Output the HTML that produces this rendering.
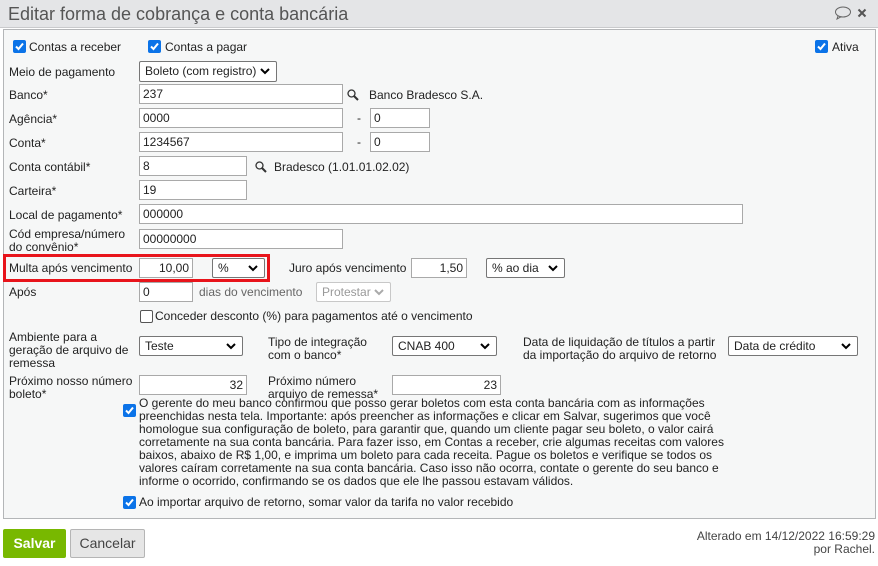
<!DOCTYPE html>
<html><head><meta charset="utf-8"><style>
*{box-sizing:border-box}
body{margin:0;width:878px;height:566px;background:#fff;font-family:"Liberation Sans","DejaVu Sans",sans-serif;font-size:12px;color:#222;position:relative;overflow:hidden}
.a{position:absolute;white-space:nowrap;line-height:13px}
.title{position:absolute;left:0;top:0;width:878px;height:28px;background:#e4e5e7;border-bottom:1px solid #c9cacc}
.panel{position:absolute;left:3px;top:29px;width:873px;height:490px;background:#f6f7f7;border:1px solid #b4b6b8}
.in{position:absolute;height:20px;background:#fff;border:1px solid #a9a9a9;padding:2px 3px;font-size:12px;line-height:14px}
.r{text-align:right}
.sel{position:absolute;height:21px;background:#fff;border:1px solid #767676;border-radius:2px;padding:2px 5px;font-size:12px;line-height:15px}
.sel svg{position:absolute;right:6px;top:6px}
.cb{position:absolute;width:13px;height:13px;background:#0b73e8;border-radius:2px}
.cb svg{position:absolute;left:1px;top:1px}
.cbe{position:absolute;width:13px;height:13px;background:#fff;border:1px solid #555;border-radius:2px}
</style></head><body>
<div class="title"><div class="a" style="left:8px;top:4px;font-size:18px;line-height:20px;color:#555">Editar forma de cobrança e conta bancária</div>
<svg style="position:absolute;left:834px;top:6px" width="18" height="14"><ellipse cx="9" cy="6" rx="7.5" ry="5" fill="none" stroke="#666" stroke-width="1"/><path d="M4 10 L3 13 L7 10.8" fill="none" stroke="#666"/></svg>
<svg style="position:absolute;left:857px;top:8px" width="10" height="10"><path d="M1.5 1.5L8.5 8.5M8.5 1.5L1.5 8.5" stroke="#555" stroke-width="2"/></svg>
</div>
<div class="panel"></div>

<div class="cb" style="left:13px;top:40px"><svg width="11" height="11"><path d="M2 5.5L4.5 8L9 2.5" fill="none" stroke="#fff" stroke-width="2"/></svg></div>
<div class="a" style="left:29px;top:41px">Contas a receber</div>
<div class="cb" style="left:148px;top:40px"><svg width="11" height="11"><path d="M2 5.5L4.5 8L9 2.5" fill="none" stroke="#fff" stroke-width="2"/></svg></div>
<div class="a" style="left:165px;top:41px">Contas a pagar</div>
<div class="cb" style="left:815px;top:40px"><svg width="11" height="11"><path d="M2 5.5L4.5 8L9 2.5" fill="none" stroke="#fff" stroke-width="2"/></svg></div>
<div class="a" style="left:832px;top:41px">Ativa</div>

<div class="a" style="left:9px;top:66px">Meio de pagamento</div>
<div class="sel" style="left:139px;top:61px;width:138px">Boleto (com registro)<svg width="10" height="7"><path d="M1 1L5 5L9 1" fill="none" stroke="#000" stroke-width="2"/></svg></div>

<div class="a" style="left:9px;top:89px">Banco*</div>
<div class="in" style="left:139px;top:84px;width:204px">237</div>
<svg style="position:absolute;left:347px;top:89px" width="12" height="12"><circle cx="4.5" cy="4.5" r="3.5" fill="none" stroke="#333" stroke-width="1.3"/><path d="M7 7L11 11" stroke="#333" stroke-width="2"/></svg>
<div class="a" style="left:369px;top:89px">Banco Bradesco S.A.</div>

<div class="a" style="left:9px;top:113px">Agência*</div>
<div class="in" style="left:139px;top:108px;width:204px">0000</div>
<div class="a" style="left:357px;top:112px">-</div>
<div class="in" style="left:370px;top:108px;width:60px">0</div>

<div class="a" style="left:9px;top:137px">Conta*</div>
<div class="in" style="left:139px;top:132px;width:204px">1234567</div>
<div class="a" style="left:357px;top:136px">-</div>
<div class="in" style="left:370px;top:132px;width:60px">0</div>

<div class="a" style="left:9px;top:161px">Conta contábil*</div>
<div class="in" style="left:139px;top:156px;width:108px">8</div>
<svg style="position:absolute;left:255px;top:161px" width="12" height="12"><circle cx="4.5" cy="4.5" r="3.5" fill="none" stroke="#333" stroke-width="1.3"/><path d="M7 7L11 11" stroke="#333" stroke-width="2"/></svg>
<div class="a" style="left:274px;top:161px">Bradesco (1.01.01.02.02)</div>

<div class="a" style="left:9px;top:185px">Carteira*</div>
<div class="in" style="left:139px;top:180px;width:108px">19</div>

<div class="a" style="left:9px;top:209px">Local de pagamento*</div>
<div class="in" style="left:139px;top:204px;width:604px">000000</div>

<div class="a" style="left:9px;top:228px">Cód empresa/número<br>do convênio*</div>
<div class="in" style="left:139px;top:229px;width:204px">00000000</div>

<div style="position:absolute;left:3px;top:254px;width:267px;height:28px;border:3px solid #e8141b"></div>
<div class="a" style="left:9px;top:262px">Multa após vencimento</div>
<div class="in r" style="left:139px;top:258px;width:54px">10,00</div>
<div class="sel" style="left:212px;top:258px;width:53px;height:20px">%<svg width="10" height="7"><path d="M1 1L5 5L9 1" fill="none" stroke="#000" stroke-width="2"/></svg></div>
<div class="a" style="left:289px;top:262px">Juro após vencimento</div>
<div class="in r" style="left:411px;top:258px;width:56px">1,50</div>
<div class="sel" style="left:486px;top:258px;width:79px;height:20px">% ao dia<svg width="10" height="7"><path d="M1 1L5 5L9 1" fill="none" stroke="#000" stroke-width="2"/></svg></div>

<div class="a" style="left:9px;top:286px">Após</div>
<div class="in" style="left:139px;top:282px;width:54px">0</div>
<div class="a" style="left:199px;top:286px;color:#666">dias do vencimento</div>
<div class="sel" style="left:316px;top:282px;width:75px;height:20px;border-color:#c8c8c8;color:#999">Protestar<svg width="10" height="7"><path d="M1 1L5 5L9 1" fill="none" stroke="#aaa" stroke-width="2"/></svg></div>

<div class="cbe" style="left:140px;top:310px"></div>
<div class="a" style="left:155px;top:310px">Conceder desconto (%) para pagamentos até o vencimento</div>

<div class="a" style="left:9px;top:331px">Ambiente para a<br>geração de arquivo de<br>remessa</div>
<div class="sel" style="left:139px;top:336px;width:104px;height:20px">Teste<svg width="10" height="7"><path d="M1 1L5 5L9 1" fill="none" stroke="#000" stroke-width="2"/></svg></div>
<div class="a" style="left:268px;top:336px">Tipo de integração<br>com o banco*</div>
<div class="sel" style="left:392px;top:336px;width:105px;height:20px">CNAB 400<svg width="10" height="7"><path d="M1 1L5 5L9 1" fill="none" stroke="#000" stroke-width="2"/></svg></div>
<div class="a" style="left:523px;top:336px">Data de liquidação de títulos a partir<br>da importação do arquivo de retorno</div>
<div class="sel" style="left:728px;top:336px;width:130px;height:20px">Data de crédito<svg width="10" height="7"><path d="M1 1L5 5L9 1" fill="none" stroke="#000" stroke-width="2"/></svg></div>

<div class="a" style="left:9px;top:375px">Próximo nosso número<br>boleto*</div>
<div class="in r" style="left:139px;top:375px;width:108px">32</div>
<div class="a" style="left:268px;top:375px">Próximo número<br>arquivo de remessa*</div>
<div class="in r" style="left:392px;top:375px;width:109px">23</div>

<div class="cb" style="left:123px;top:404px"><svg width="11" height="11"><path d="M2 5.5L4.5 8L9 2.5" fill="none" stroke="#fff" stroke-width="2"/></svg></div>
<div class="a" style="left:139px;top:397px;line-height:13px">O gerente do meu banco confirmou que posso gerar boletos com esta conta bancária com as informações<br>preenchidas nesta tela. Importante: após preencher as informações e clicar em Salvar, sugerimos que você<br>homologue sua configuração de boleto, para garantir que, quando um cliente pagar seu boleto, o valor cairá<br>corretamente na sua conta bancária. Para fazer isso, em Contas a receber, crie algumas receitas com valores<br>baixos, abaixo de R$ 1,00, e imprima um boleto para cada receita. Pague os boletos e verifique se todos os<br>valores caíram corretamente na sua conta bancária. Caso isso não ocorra, contate o gerente do seu banco e<br>informe o ocorrido, confirmando se os dados que ele lhe passou estavam válidos.</div>

<div class="cb" style="left:123px;top:496px"><svg width="11" height="11"><path d="M2 5.5L4.5 8L9 2.5" fill="none" stroke="#fff" stroke-width="2"/></svg></div>
<div class="a" style="left:139px;top:496px">Ao importar arquivo de retorno, somar valor da tarifa no valor recebido</div>

<div style="position:absolute;left:3px;top:529px;width:63px;height:29px;background:#78b800;border-radius:2px;color:#fff;font-weight:bold;font-size:14px;line-height:29px;text-align:center">Salvar</div>
<div style="position:absolute;left:70px;top:529px;width:75px;height:29px;background:#e6e6e6;border:1px solid #b5b5b5;border-radius:2px;color:#444;font-size:14px;line-height:27px;text-align:center">Cancelar</div>
<div class="a" style="right:3px;top:530px;text-align:right;color:#444">Alterado em 14/12/2022 16:59:29<br>por Rachel.</div>
</body></html>
